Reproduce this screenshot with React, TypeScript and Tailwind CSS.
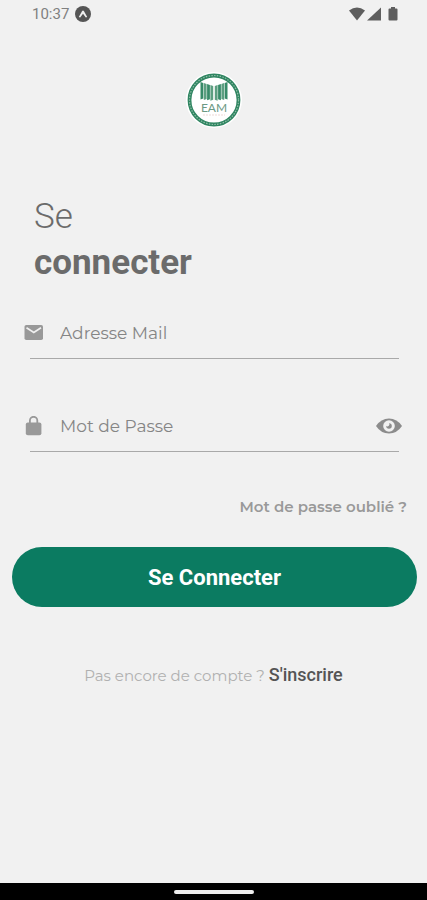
import React, { useState } from 'react';

const PAGES = [0, 1, 2, 3];

function StatusBar() {
  return (
    <div className="h-7 pl-8 pr-[26px] flex items-center justify-between text-[#5e5e5e]">
      <div className="flex items-center gap-1.5">
        <span className="text-[15px] text-[#808080]">10:37</span>
        <svg className="w-4 h-4" viewBox="0 0 16 16" aria-hidden="true">
          <circle cx="8" cy="8" r="8" fill="#555555" />
          <path d="M3.8 11 7 5.2Q8 3.8 9 5.2L12.2 11 10.8 11.6 8 7.8 5.2 11.6Z" fill="#f1f1f1" />
        </svg>
      </div>
      <div className="flex items-center gap-0.5">
        <svg className="w-4 h-4" viewBox="0 0 16 16" fill="currentColor" aria-hidden="true">
          <path d="M0 4.6Q8-1.4 16 4.6L8 14.5Z" />
        </svg>
        <svg className="w-3.5 h-4" viewBox="0 0 14 16" fill="currentColor" aria-hidden="true">
          <path d="M14 1.5V14.5H0Z" />
        </svg>
        <svg className="ml-0.5 w-4 h-4" viewBox="0 0 16 16" fill="currentColor" aria-hidden="true">
          <path d="M6 1h4v1.5h1.5q1 0 1 1v10q0 1-1 1h-7q-1 0-1-1v-10q0-1 1-1H6Z" />
        </svg>
      </div>
    </div>
  );
}

function Logo() {
  return (
    <svg className="w-14 h-14" viewBox="0 0 56 56" role="img" aria-label="EAM">
      <circle cx="28" cy="28" r="28" fill="#ffffff" />
      <circle cx="28" cy="28" r="24.5" fill="none" stroke="#2f8561" strokeWidth="3.8" />
      <circle cx="28" cy="28" r="24.5" fill="none" stroke="#8fbda7" strokeWidth="1.2" strokeDasharray="1.5 1.3" />
      {PAGES.map((i) => (
        <g key={i} fill={i % 2 === 0 ? '#388b69' : '#5d9f81'}>
          <path d={`M${14.5 + i * 3.3} ${10 + i}l2.8 1v${15.5 - i * 0.6}l-2.8 1Z`} />
          <path d={`M${41.5 - i * 3.3} ${10 + i}l-2.8 1v${15.5 - i * 0.6}l2.8 1Z`} />
        </g>
      ))}
      <text x="28" y="40" textAnchor="middle" fontSize="12" fill="#6c9984" fontFamily="Lato, sans-serif">
        EAM
      </text>
      <path d="M17 43H39" stroke="#edd9d7" strokeWidth="1" strokeDasharray="2 1" />
    </svg>
  );
}

function MailIcon() {
  return (
    <svg className="w-5 h-5" viewBox="0 0 20 20" aria-hidden="true">
      <rect x="0.5" y="2" width="18.5" height="15" rx="1.8" fill="#999999" />
      <path d="m2.5 4.7 7.3 4.7L17 4.7" fill="none" stroke="#f1f1f1" strokeWidth="1.7" />
    </svg>
  );
}

function LockIcon() {
  return (
    <svg className="w-5 h-5" viewBox="0 0 20 20" aria-hidden="true">
      <path d="M5.9 9V4.5a3.7 3.7 0 0 1 7.4 0v4" fill="none" stroke="#999999" strokeWidth="1.8" />
      <rect x="1.8" y="6.5" width="15.6" height="12.8" rx="2" fill="#999999" />
    </svg>
  );
}

function EyeIcon() {
  return (
    <svg className="w-[26px] h-4" viewBox="0 0 26 16" aria-hidden="true">
      <path d="M0 8Q5 .5 13 .5T26 8Q21 15.5 13 15.5T0 8Z" fill="#8c8c8c" />
      <circle cx="13" cy="8" r="5.8" fill="#f1f1f1" />
      <path d="M13 5.2a2.8 2.8 0 1 1-2.8 2.8 2 2 0 0 0 2.8-2.8Z" fill="#8c8c8c" />
    </svg>
  );
}

interface FieldProps {
  id: string;
  label: string;
  type: string;
  icon: React.ReactNode;
  action?: React.ReactNode;
}

function Field({ id, label, type, icon, action }: FieldProps) {
  return (
    <div>
      <div className="flex items-center h-10 pl-6 pr-[25px]">
        <label htmlFor={id} className="shrink-0">
          {icon}
        </label>
        <input
          id={id}
          type={type}
          aria-label={label}
          placeholder={label}
          className="ml-4 flex-1 min-w-0 bg-transparent outline-none font-[Montserrat,Inter,sans-serif] text-[17px] leading-6 text-[#666666] placeholder:text-[#858585]"
        />
        {action}
      </div>
      <div className="mt-[5px] ml-[30px] mr-7 h-px bg-[#a9a9a9]" />
    </div>
  );
}

export default function App() {
  const [showPassword, setShowPassword] = useState(false);

  return (
    <div className="min-h-screen flex flex-col bg-[#f1f1f1] font-[Roboto,sans-serif]">
      <StatusBar />

      <main className="flex-1">
        <div className="mt-11 flex justify-center">
          <Logo />
        </div>

        <h1 className="mt-[66px] px-[34px] text-[35px] leading-[46px] text-[#6b6b6b]">
          <span className="block font-light">Se</span>
          <span className="block font-bold">connecter</span>
        </h1>

        <form onSubmit={(e) => e.preventDefault()}>
          <div className="mt-[27px] flex flex-col gap-[47px]">
            <Field id="email" label="Adresse Mail" type="email" icon={<MailIcon />} />
            <Field
              id="password"
              label="Mot de Passe"
              type={showPassword ? 'text' : 'password'}
              icon={<LockIcon />}
              action={
                <button
                  type="button"
                  aria-label="Afficher le mot de passe"
                  onClick={() => setShowPassword(!showPassword)}
                >
                  <EyeIcon />
                </button>
              }
            />
          </div>

          <div className="mt-[43px] px-5 flex justify-end">
            <a href="#" className="font-[Montserrat,Inter,sans-serif] text-[15px] leading-6 font-semibold text-[#999999]">
              Mot de passe oublié ?
            </a>
          </div>

          <div className="mt-7 pl-3 pr-2.5">
            <button type="submit" className="w-full h-[60px] rounded-full bg-[#0b7b61] text-white text-[22px] font-bold">
              Se Connecter
            </button>
          </div>
        </form>

        <p className="mt-14 text-center leading-6 text-[#b0b0b0]">
          <span className="font-[Montserrat,Inter,sans-serif] text-[15px]">Pas encore de compte ? </span>
          <a href="#" className="text-lg leading-6 font-medium text-[#555555]">
            S'inscrire
          </a>
        </p>
      </main>

      <div className="h-[17px] bg-black flex items-center justify-center">
        <div className="w-20 h-1 rounded-full bg-[#eeeeee]" />
      </div>
    </div>
  );
}
